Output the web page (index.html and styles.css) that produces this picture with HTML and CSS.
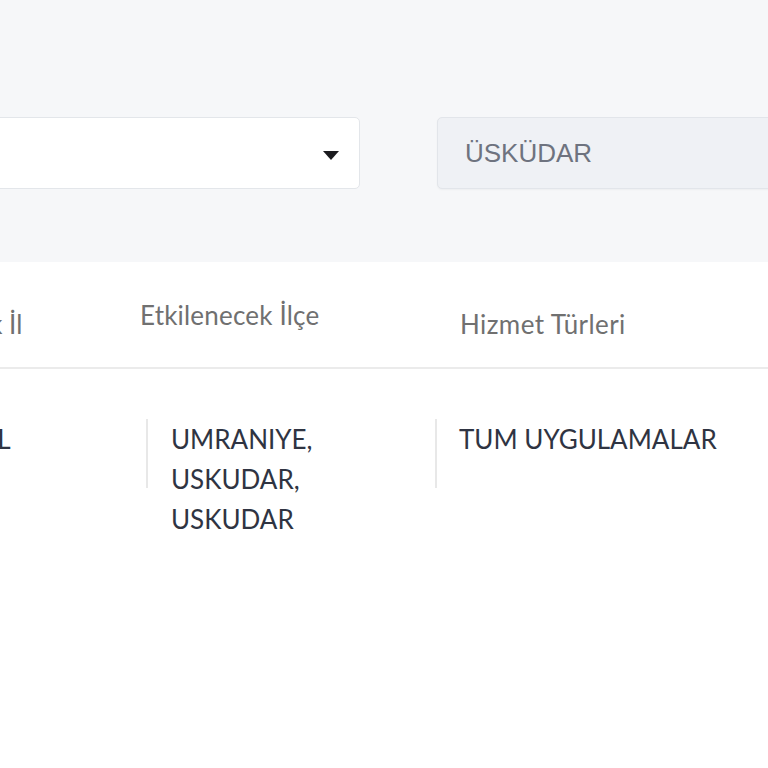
FILE: index.html
```html
<!DOCTYPE html>
<html lang="tr">
<head>
    <meta charset="UTF-8">
    <meta name="viewport" content="width=device-width, initial-scale=1.0">
    <title>Kesinti Bildirimleri</title>
    <link rel="stylesheet" href="styles.css">
</head>
<body>
    <div class="page">
        <!-- Filters -->
        <div class="filters">
            <div class="select-box">
                <span class="select-value">İSTANBUL</span>
                <span class="select-arrow"></span>
            </div>
            <div class="text-box">ÜSKÜDAR</div>
        </div>

        <!-- Table -->
        <div class="table">
            <div class="table-head">
                <div class="th th-il">Etkilenecek İl</div>
                <div class="th th-ilce">Etkilenecek İlçe</div>
                <div class="th th-hizmet">Hizmet Türleri</div>
            </div>
            <div class="table-row">
                <div class="td td-il">ISTANBUL</div>
                <div class="td">
                    <span class="sep"></span>
                    <span class="cell-text">UMRANIYE,<br>USKUDAR,<br>USKUDAR</span>
                </div>
                <div class="td td-hizmet">
                    <span class="sep"></span>
                    <span class="cell-text">TUM UYGULAMALAR</span>
                </div>
            </div>
        </div>
    </div>
</body>
</html>
```

FILE: styles.css
```css
/* Reset */
* {
    margin: 0;
    padding: 0;
    box-sizing: border-box;
}

html, body {
    height: 100%;
}

body {
    font-family: 'Lato', 'Noto Sans', sans-serif;
    background-color: #fff;
    overflow: hidden;
}

/* Page is shifted left, first column partly out of view */
.page {
    width: 1200px;
    margin-left: -160px;
}

/* Filter bar */
.filters {
    background-color: #f6f7f9;
    height: 262px;
    padding-top: 117px;
    display: flex;
    gap: 77px;
}

.select-box {
    flex: 0 0 520px;
    height: 72px;
    background-color: #fff;
    border: 1px solid #e3e6ea;
    border-radius: 5px;
    display: flex;
    align-items: center;
    justify-content: space-between;
    padding: 0 20px 0 28px;
}

.select-value {
    font-family: 'Liberation Sans', Arial, sans-serif;
    font-size: 25px;
    color: #333;
}

.select-arrow {
    width: 0;
    height: 0;
    border-left: 8px solid transparent;
    border-right: 8px solid transparent;
    border-top: 9px solid #1b1b1f;
    margin-top: 4px;
}

.text-box {
    flex: 0 0 520px;
    height: 72px;
    background-color: #eff1f5;
    border: 1px solid #e2e5ea;
    border-radius: 5px;
    box-shadow: 0 1px 2px rgba(0, 0, 0, 0.04);
    padding-left: 27px;
    display: flex;
    align-items: center;
    font-family: 'Liberation Sans', Arial, sans-serif;
    font-size: 26px;
    color: #6e737f;
}

/* Table */
.table-head {
    display: grid;
    grid-template-columns: 300px 320px 1fr;
    height: 107px;
    border-bottom: 2px solid #ebebeb;
}

.th {
    font-size: 26px;
    line-height: 40px;
    color: #707070;
    padding-top: 42px;
}

.th-il {
    padding-left: 32px;
}

.th-ilce {
    padding-top: 33px;
    letter-spacing: 0.2px;
}

.th-hizmet {
    letter-spacing: 0.4px;
}

.table-row {
    display: grid;
    grid-template-columns: 306px 289px 1fr;
    padding-top: 50px;
}

.td {
    display: flex;
    align-items: flex-start;
    font-size: 26px;
    line-height: 40px;
    color: #2f3442;
}

.td-il {
    padding-left: 49px;
}

.td-hizmet .sep {
    margin-right: 22px;
}

.sep {
    width: 2px;
    height: 69px;
    background-color: #e8e8e8;
    margin-right: 23px;
    flex-shrink: 0;
}
```
